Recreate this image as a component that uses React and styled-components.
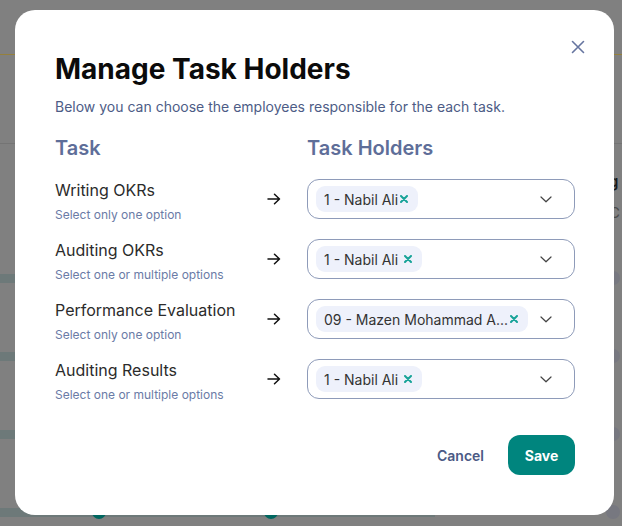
import React from 'react'
import styled, { createGlobalStyle } from 'styled-components'

const GlobalStyle = createGlobalStyle`
  html, body {
    margin: 0;
    padding: 0;
  }
  body {
    background: #808080;
    font-family: Inter, "Noto Sans", sans-serif;
    -webkit-font-smoothing: antialiased;
  }
`

const rows = [
  { task: 'Writing OKRs', hint: 'Select only one option', holder: '1 - Nabil Ali', tight: true },
  { task: 'Auditing OKRs', hint: 'Select one or multiple options', holder: '1 - Nabil Ali' },
  { task: 'Performance Evaluation', hint: 'Select only one option', holder: '09 - Mazen Mohammad A...', tight: true },
  { task: 'Auditing Results', hint: 'Select one or multiple options', holder: '1 - Nabil Ali' },
]

function CloseIcon() {
  return (
    <svg width="14" height="14" viewBox="0 0 14 14" fill="none">
      <path d="M1.5 1.5L12.5 12.5M12.5 1.5L1.5 12.5" stroke="#6675a0" strokeWidth="1.6" strokeLinecap="round" />
    </svg>
  )
}

function ArrowIcon() {
  return (
    <svg width="14" height="12" viewBox="0 0 14 12" fill="none">
      <path d="M1 6H12.5M7.5 1.2L12.5 6L7.5 10.8" stroke="#111" strokeWidth="1.5" strokeLinecap="round" strokeLinejoin="round" />
    </svg>
  )
}

function RemoveIcon() {
  return (
    <svg width="8" height="8" viewBox="0 0 8 8" fill="none">
      <path d="M1 1L7 7M7 1L1 7" stroke="#17a398" strokeWidth="2" strokeLinecap="round" />
    </svg>
  )
}

function Chevron() {
  return (
    <svg width="12" height="7" viewBox="0 0 12 7" fill="none">
      <path d="M1 1L6 5.8L11 1" stroke="#444" strokeWidth="1.2" strokeLinecap="round" strokeLinejoin="round" />
    </svg>
  )
}

export default function App() {
  return (
    <>
      <GlobalStyle />
      <Backdrop>
        <TopBar />
        <Divider />
        {[0, 1, 2].map((i) => (
          <Track key={i}>
            <Bar />
            <Dot />
          </Track>
        ))}
        <Track>
          <Bar>
            <Dot teal />
            <Dot teal />
          </Bar>
          <Dot />
        </Track>
        <Peek>
          <span>g</span>
          <span>C</span>
        </Peek>

        <Modal>
          <CloseButton aria-label="Close">
            <CloseIcon />
          </CloseButton>
          <Title>Manage Task Holders</Title>
          <Subtitle>Below you can choose the employees responsible for the each task.</Subtitle>

          <HeadRow>
            <ColumnHead>Task</ColumnHead>
            <span />
            <ColumnHead>Task Holders</ColumnHead>
          </HeadRow>

          <RowList>
            {rows.map((r) => (
              <Row key={r.task}>
                <TaskInfo>
                  <TaskName>{r.task}</TaskName>
                  <TaskHint>{r.hint}</TaskHint>
                </TaskInfo>
                <ArrowCell>
                  <ArrowIcon />
                </ArrowCell>
                <Select>
                  <Chip tight={r.tight}>
                    {r.holder}
                    <RemoveIcon />
                  </Chip>
                  <Chevron />
                </Select>
              </Row>
            ))}
          </RowList>

          <Footer>
            <CancelButton>Cancel</CancelButton>
            <SaveButton>Save</SaveButton>
          </Footer>
        </Modal>
      </Backdrop>
    </>
  )
}

const Backdrop = styled.div`
  position: relative;
  width: 622px;
  height: 526px;
  overflow: hidden;
  background: #808080;
  display: flex;
  flex-direction: column;
`

const TopBar = styled.div`
  height: 54px;
  flex-shrink: 0;
  border-bottom: 1px solid #95803c;
`

const Divider = styled.div`
  height: 1px;
  flex-shrink: 0;
  margin-top: 88px;
  background: #747474;
`

const Track = styled.div`
  display: flex;
  align-items: center;
  justify-content: space-between;
  height: 12px;
  flex-shrink: 0;
  margin-top: 66px;
  padding-right: 2px;
  &:nth-of-type(3) {
    margin-top: 128px;
  }
`

const Bar = styled.div`
  width: 435px;
  height: 9px;
  background: #6d7979;
  display: flex;
  align-items: center;
  gap: 158px;
  padding-left: 92px;
  box-sizing: border-box;
`

const Dot = styled.span`
  width: 14px;
  height: 14px;
  border-radius: 50%;
  background: ${(p) => (p.teal ? '#00665f' : '#777880')};
`

const Peek = styled.div`
  position: absolute;
  top: 172px;
  left: 609px;
  display: flex;
  flex-direction: column;
  gap: 12px;
  font-size: 15px;
  font-weight: 600;
  color: #1a1a1a;
  span:last-child {
    color: #4a4a4a;
    font-weight: 400;
  }
`

const Modal = styled.div`
  position: absolute;
  top: 10px;
  left: 15px;
  width: 599px;
  height: 505px;
  box-sizing: border-box;
  padding: 42px 39px 40px 40px;
  background: #fff;
  border-radius: 20px;
  display: flex;
  flex-direction: column;
`

const CloseButton = styled.button`
  position: absolute;
  top: 29px;
  right: 28px;
  width: 16px;
  height: 16px;
  padding: 0;
  border: 0;
  background: none;
  display: flex;
  align-items: center;
  justify-content: center;
  cursor: pointer;
`

const Title = styled.h1`
  margin: 0;
  font-size: 28px;
  line-height: 34px;
  font-weight: 700;
  color: #0b0b0b;
`

const Subtitle = styled.p`
  margin: 12px 0 0;
  font-size: 14px;
  line-height: 18px;
  color: #4d5c86;
`

const Columns = styled.div`
  display: grid;
  grid-template-columns: 212px 40px 268px;
  align-items: start;
`

const HeadRow = styled(Columns)`
  margin-top: 20px;
`

const ColumnHead = styled.h2`
  margin: 0;
  font-size: 20px;
  line-height: 24px;
  font-weight: 600;
  color: #5e6e99;
`

const RowList = styled.div`
  display: flex;
  flex-direction: column;
  gap: 20px;
  margin-top: 19px;
`

const Row = styled(Columns)`
  height: 40px;
`

const TaskInfo = styled.div`
  display: flex;
  flex-direction: column;
  gap: 7px;
  padding-top: 1px;
`

const TaskName = styled.span`
  font-size: 16px;
  line-height: 20px;
  color: #2b2b2b;
  white-space: nowrap;
`

const TaskHint = styled.span`
  font-size: 12px;
  line-height: 16px;
  color: #6a7ba6;
`

const ArrowCell = styled.div`
  height: 40px;
  display: flex;
  align-items: center;
  padding-left: 55px;
  margin-left: -55px;
`

const Select = styled.div`
  height: 40px;
  box-sizing: border-box;
  border: 1px solid #8e9bb9;
  border-radius: 12px;
  display: flex;
  align-items: center;
  justify-content: space-between;
  padding: 0 22px 0 8px;
`

const Chip = styled.span`
  height: 26px;
  display: inline-flex;
  align-items: center;
  gap: ${(p) => (p.tight ? '2px' : '6px')};
  padding: 0 10px 0 8px;
  border-radius: 9px;
  background: #eef1fb;
  font-size: 14px;
  color: #333;
  white-space: nowrap;
`

const Footer = styled.div`
  margin-top: auto;
  display: flex;
  justify-content: flex-end;
  align-items: center;
  gap: 8px;
`

const CancelButton = styled.button`
  height: 40px;
  padding: 0 16px;
  border: 0;
  background: none;
  font-family: inherit;
  font-size: 14px;
  font-weight: 600;
  color: #4b5a85;
  cursor: pointer;
`

const SaveButton = styled.button`
  height: 40px;
  width: 67px;
  border: 0;
  border-radius: 12px;
  background: #00857e;
  font-family: inherit;
  font-size: 14px;
  font-weight: 700;
  color: #fff;
  cursor: pointer;
`
